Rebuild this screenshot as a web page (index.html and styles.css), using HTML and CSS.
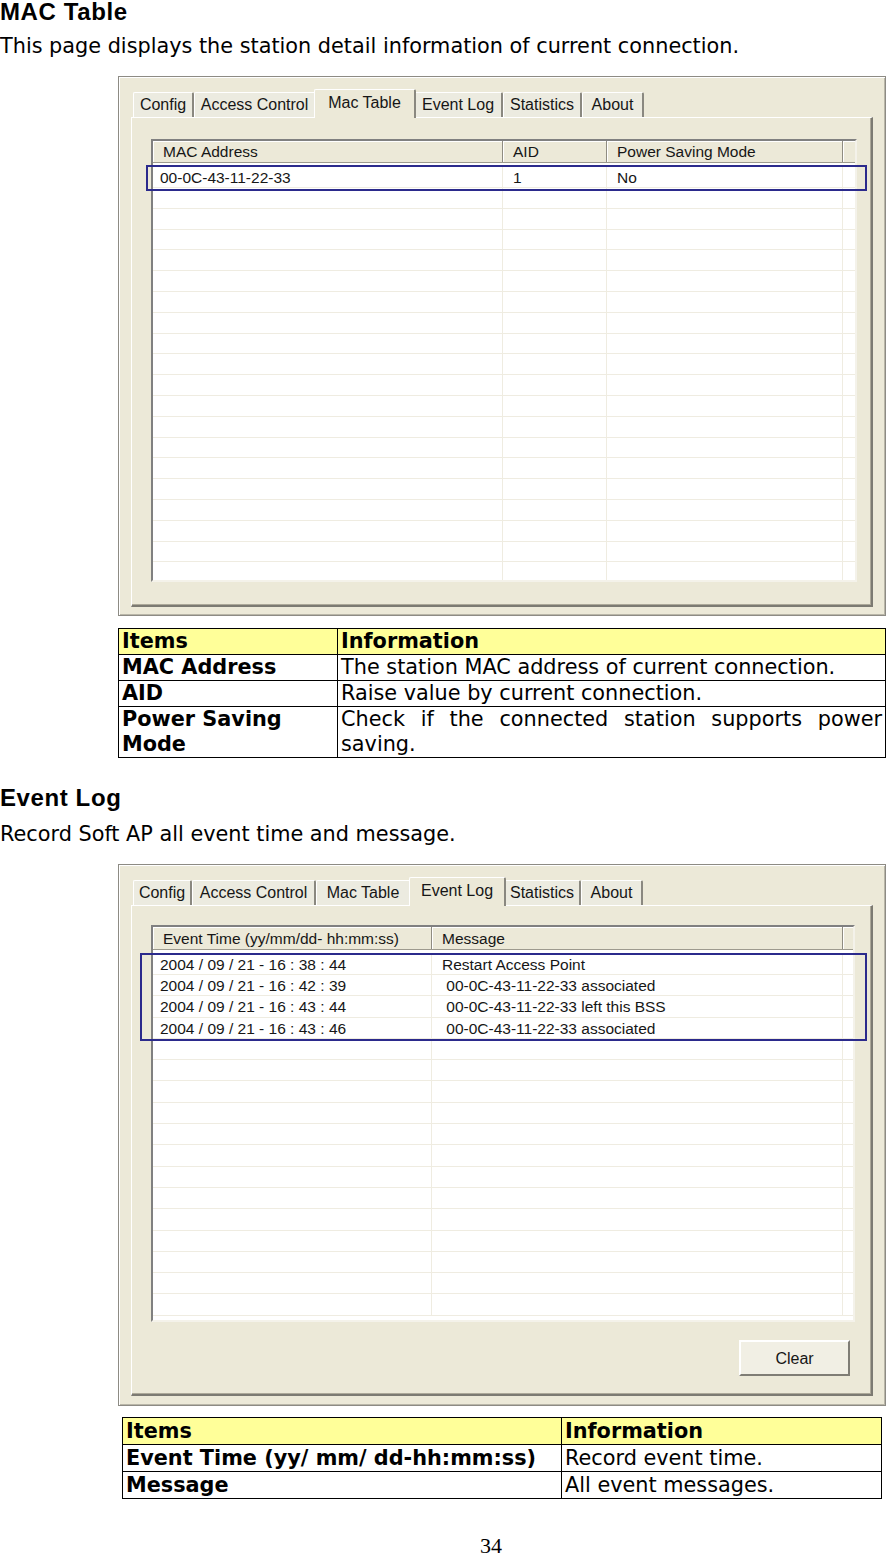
FILE: index.html
```html
<!DOCTYPE html>
<html lang="en">
<head>
<meta charset="utf-8">
<title>MAC Table / Event Log</title>
<link rel="stylesheet" href="styles.css">
</head>
<body>
<h2 class="title">MAC Table</h2>
<p class="lead">This page displays the station detail information of current connection.</p>

<div class="shot shot-mac">
  <div class="tabs tabs-mac">
    <div class="tab">Config</div>
    <div class="tab">Access Control</div>
    <div class="tab active">Mac Table</div>
    <div class="tab">Event Log</div>
    <div class="tab">Statistics</div>
    <div class="tab">About</div>
  </div>
  <div class="panel panel-mac">
    <div class="list list-mac">
      <div class="lrow lhead"><span>MAC Address</span><span>AID</span><span>Power Saving Mode</span><span></span></div>
      <div class="lrow first"><span>00-0C-43-11-22-33</span><span>1</span><span>No</span><span></span></div>
      <div class="lrow"><span></span><span></span><span></span><span></span></div>
      <div class="lrow"><span></span><span></span><span></span><span></span></div>
      <div class="lrow"><span></span><span></span><span></span><span></span></div>
      <div class="lrow"><span></span><span></span><span></span><span></span></div>
      <div class="lrow"><span></span><span></span><span></span><span></span></div>
      <div class="lrow"><span></span><span></span><span></span><span></span></div>
      <div class="lrow"><span></span><span></span><span></span><span></span></div>
      <div class="lrow"><span></span><span></span><span></span><span></span></div>
      <div class="lrow"><span></span><span></span><span></span><span></span></div>
      <div class="lrow"><span></span><span></span><span></span><span></span></div>
      <div class="lrow"><span></span><span></span><span></span><span></span></div>
      <div class="lrow"><span></span><span></span><span></span><span></span></div>
      <div class="lrow"><span></span><span></span><span></span><span></span></div>
      <div class="lrow"><span></span><span></span><span></span><span></span></div>
      <div class="lrow"><span></span><span></span><span></span><span></span></div>
      <div class="lrow"><span></span><span></span><span></span><span></span></div>
      <div class="lrow"><span></span><span></span><span></span><span></span></div>
      <div class="lrow"><span></span><span></span><span></span><span></span></div>
      <div class="lrow"><span></span><span></span><span></span><span></span></div>
    </div>
  </div>
  <div class="mark mark-mac"></div>
</div>

<table class="info info-mac">
  <tr class="head"><td class="c1">Items</td><td>Information</td></tr>
  <tr><td class="c1">MAC Address</td><td>The station MAC address of current connection.</td></tr>
  <tr><td class="c1">AID</td><td>Raise value by current connection.</td></tr>
  <tr><td class="c1">Power Saving Mode</td><td class="just">Check if the connected station supports power saving.</td></tr>
</table>

<h2 class="title title-2">Event Log</h2>
<p class="lead lead-2">Record Soft AP all event time and message.</p>

<div class="shot shot-log">
  <div class="tabs tabs-log">
    <div class="tab">Config</div>
    <div class="tab">Access Control</div>
    <div class="tab">Mac Table</div>
    <div class="tab active">Event Log</div>
    <div class="tab">Statistics</div>
    <div class="tab">About</div>
  </div>
  <div class="panel panel-log">
    <div class="list list-log">
      <div class="lrow lhead"><span>Event Time (yy/mm/dd- hh:mm:ss)</span><span>Message</span><span></span></div>
      <div class="lrow first"><span>2004 / 09 / 21 - 16 : 38 : 44</span><span>Restart Access Point</span><span></span></div>
      <div class="lrow"><span>2004 / 09 / 21 - 16 : 42 : 39</span><span> 00-0C-43-11-22-33 associated</span><span></span></div>
      <div class="lrow"><span>2004 / 09 / 21 - 16 : 43 : 44</span><span> 00-0C-43-11-22-33 left this BSS</span><span></span></div>
      <div class="lrow"><span>2004 / 09 / 21 - 16 : 43 : 46</span><span> 00-0C-43-11-22-33 associated</span><span></span></div>
      <div class="lrow"><span></span><span></span><span></span></div>
      <div class="lrow"><span></span><span></span><span></span></div>
      <div class="lrow"><span></span><span></span><span></span></div>
      <div class="lrow"><span></span><span></span><span></span></div>
      <div class="lrow"><span></span><span></span><span></span></div>
      <div class="lrow"><span></span><span></span><span></span></div>
      <div class="lrow"><span></span><span></span><span></span></div>
      <div class="lrow"><span></span><span></span><span></span></div>
      <div class="lrow"><span></span><span></span><span></span></div>
      <div class="lrow"><span></span><span></span><span></span></div>
      <div class="lrow"><span></span><span></span><span></span></div>
      <div class="lrow"><span></span><span></span><span></span></div>
      <div class="lrow"><span></span><span></span><span></span></div>
    </div>
    <div class="btn-row"><div class="btn">Clear</div></div>
  </div>
  <div class="mark mark-log"></div>
</div>

<table class="info info-log">
  <tr class="head"><td class="c1">Items</td><td>Information</td></tr>
  <tr><td class="c1">Event Time (yy/ mm/ dd-hh:mm:ss)</td><td>Record event time.</td></tr>
  <tr><td class="c1">Message</td><td>All event messages.</td></tr>
</table>

<div class="page-num">34</div>
</body>
</html>
```

FILE: styles.css
```css
html, body {
  margin: 0;
  padding: 0;
  background: #ffffff;
}
body {
  width: 887px;
  font-family: "DejaVu Sans", Verdana, sans-serif;
  color: #000;
}

.title {
  margin: 0;
  font-family: "Liberation Sans", Arial, sans-serif;
  font-weight: bold;
  font-size: 24px;
  line-height: 24px;
  letter-spacing: 0.6px;
}
.title-2 {
  margin-top: 28px;
}
.lead {
  margin: 10px 0 0 0;
  font-size: 20.8px;
  line-height: 24px;
}
.lead-2 {
  margin-top: 12px;
}

/* ---------- screenshot window ---------- */
.shot {
  position: relative;
  box-sizing: border-box;
  margin: 18px 0 0 118px;
  width: 768px;
  background: #ece9d8;
  border: 1px solid #8d8b84;
  box-shadow: inset 1px 1px 0 #ffffff, inset -1px -1px 0 #b9b6a8;
  padding: 12px 12px 0 12px;
  font-family: "Liberation Sans", Tahoma, sans-serif;
  font-size: 15.5px;
  color: #161616;
}
.shot-mac { height: 540px; }
.shot-log { height: 542px; }

.tabs {
  display: grid;
  height: 28px;
  align-items: end;
  padding-left: 2px;
  position: relative;
  z-index: 1;
  font-size: 16px;
}
.tabs-mac { grid-template-columns: 61px 122px 98px 89px 79px 62px; }
.tabs-log { grid-template-columns: 59px 124px 95px 93px 77px 62px; }

.tab {
  box-sizing: border-box;
  height: 25px;
  line-height: 23px;
  text-align: center;
  background: #ecebe0;
  border-top: 1px solid #ffffff;
  border-left: 1px solid #ffffff;
  border-right: 2px solid #8a8880;
  border-radius: 2px 2px 0 0;
  white-space: nowrap;
}
.tab.active {
  height: 29px;
  line-height: 25px;
  margin: 0 -2px -1px -2px;
  background: #ece9d8;
  position: relative;
}

.panel {
  box-sizing: border-box;
  background: #ece9d8;
  border-top: 1px solid #ffffff;
  border-left: 1px solid #ffffff;
  border-right: 2px solid #7c7a72;
  border-bottom: 2px solid #7c7a72;
  box-shadow: inset -1px -1px 0 #aca899;
}
.panel-mac {
  height: 490px;
  padding: 21px 0 0 19px;
}
.panel-log {
  height: 491px;
  padding: 19px 0 0 19px;
}

/* ---------- list view ---------- */
.list {
  box-sizing: border-box;
  background: #ffffff;
  border-top: 2px solid #808080;
  border-left: 2px solid #808080;
  border-right: 2px solid #f4f2ea;
  border-bottom: 2px solid #f4f2ea;
  overflow: hidden;
}
.list-mac { width: 706px; height: 443px; }
.list-log { width: 704px; height: 397px; }

.lrow {
  display: grid;
  box-sizing: border-box;
  height: 21px;
  border-bottom: 1px solid #efece1;
  line-height: 21px;
}
.list-mac .lrow { grid-template-columns: 350px 104px 236px 12px; height: 20.8px; }
.list-log .lrow { grid-template-columns: 279px 411px 10px; height: 21.3px; }
.list .lrow.first {
  height: 25px;
  padding-top: 4px;
}

.lrow span {
  display: block;
  box-sizing: border-box;
  padding-left: 7px;
  border-right: 1px solid #efece1;
  white-space: pre;
  overflow: hidden;
}
.lrow span + span { padding-left: 10px; }
.lrow span:last-child { border-right: 0; }

.lrow.lhead {
  height: 22px;
  line-height: 22px;
  background: #ece9d8;
  border-bottom: 1px solid #9d9a8e;
}
.list-log .lrow.lhead { height: 23px; line-height: 23px; }
.lrow.lhead span {
  padding-left: 10px;
  border-right: 1px solid #8f8c81;
  box-shadow: inset 1px 1px 0 #ffffff;
}
.lrow.lhead span:last-child { border-right: 0; }

/* ---------- selection mark ---------- */
.mark {
  position: absolute;
  border: 2px solid #2b2a8c;
  box-sizing: border-box;
}
.mark-mac { left: 27px; top: 88px; width: 721px; height: 26px; }
.mark-log { left: 21px; top: 88px; width: 727px; height: 88px; }

/* ---------- button ---------- */
.btn-row {
  display: flex;
  justify-content: flex-end;
  padding: 18px 21px 0 0;
}
.btn {
  box-sizing: border-box;
  width: 111px;
  height: 36px;
  line-height: 33px;
  text-align: center;
  font-size: 16px;
  background: #f1efe4;
  border-top: 2px solid #ffffff;
  border-left: 2px solid #ffffff;
  border-right: 2px solid #7f7d75;
  border-bottom: 2px solid #7f7d75;
}

/* ---------- info tables ---------- */
.info {
  border-collapse: collapse;
  font-size: 20.8px;
  line-height: 25px;
}
.info td {
  border: 1px solid #000;
  padding: 0 3px;
  vertical-align: top;
}
.info .c1 { font-weight: bold; }
.info .head td {
  background: #ffff99;
  font-weight: bold;
}
.info .just { text-align: justify; }

.info-mac {
  margin: 12px 0 0 118px;
  width: 768px;
}
.info-mac .c1 { width: 212px; }
.info-log {
  margin: 11px 0 0 122px;
  width: 760px;
  line-height: 26px;
}
.info-log .c1 { width: 432px; }

.page-num {
  margin-top: 38px;
  padding-left: 95px;
  text-align: center;
  font-family: "Liberation Serif", "Times New Roman", serif;
  font-size: 22px;
  line-height: 18px;
}
```
